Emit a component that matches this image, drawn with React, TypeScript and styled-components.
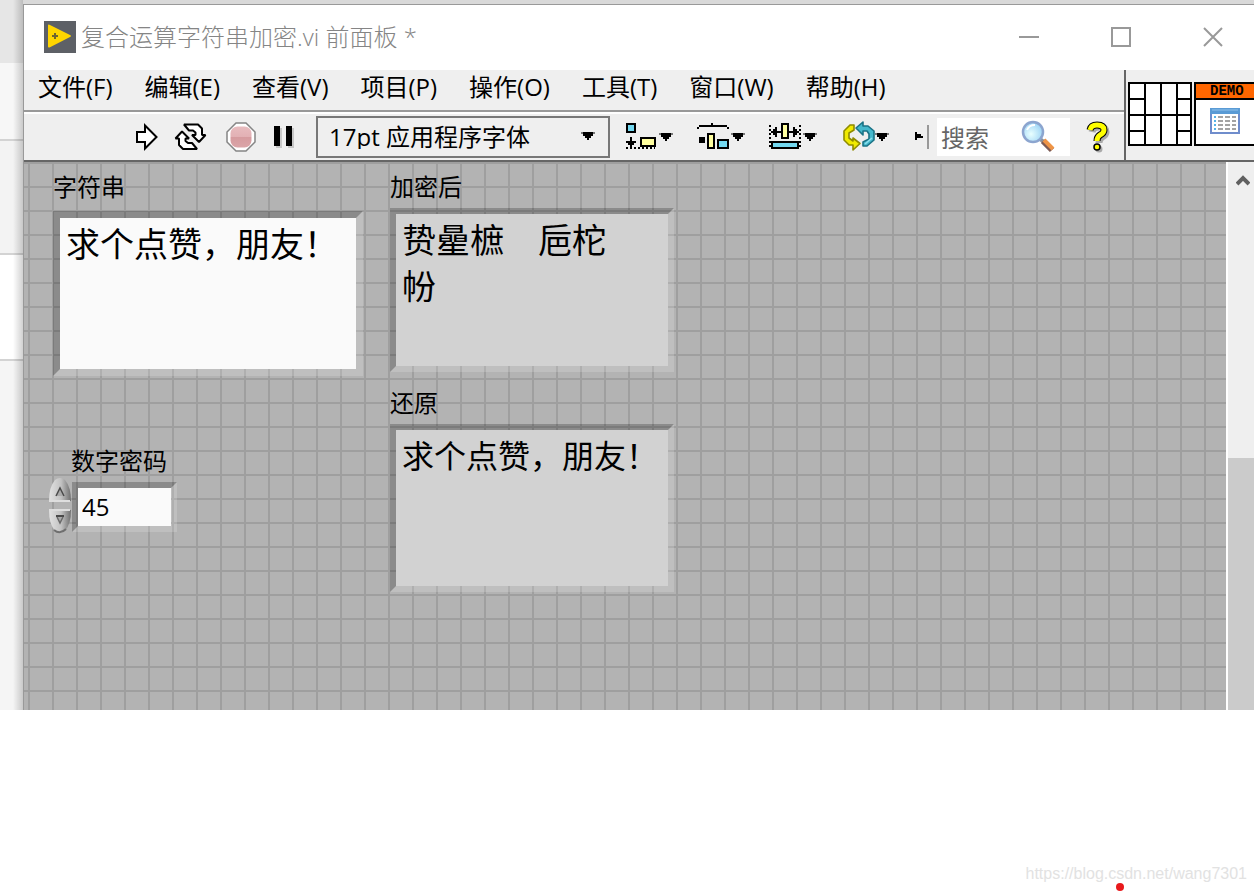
import React from "react";
import styled, { createGlobalStyle } from "styled-components";

const GlobalStyle = createGlobalStyle`
  *, *::before, *::after { box-sizing: border-box; }
  body { margin: 0; background: #ffffff; }
  button, input, select, textarea { font: inherit; color: inherit; border-radius: 0; }
  svg { display: block; flex: none; }
`;

const Page = styled.div`
  min-height: 100vh;
  display: flex;
  flex-direction: column;
  overflow-x: hidden;
  font-family: "Open Sans", "Noto Sans CJK SC", sans-serif;
  font-size: 24px;
  line-height: 24px;
  color: #000000;
`;

const Desktop = styled.main`
  display: flex;
  padding-top: 4px;
  background: #d9d9d9;
`;

const Backdrop = styled.div`
  width: 23px;
  flex: none;
  display: flex;
  flex-direction: column;
  margin-top: -4px;
  position: relative;
  &::after {
    content: "";
    position: absolute;
    inset: 0 0 0 auto;
    width: 10px;
    background: linear-gradient(to right, rgba(0, 0, 0, 0), rgba(0, 0, 0, 0.18));
  }
`;

const Strip = styled.div<{ $h?: number; $tone: string; $line?: boolean }>`
  ${(p) => (p.$h ? `height: ${p.$h}px;` : "flex: 1;")}
  background: ${(p) => p.$tone};
  border-bottom: ${(p) => (p.$line ? "2px solid #d3d3d3" : "none")};
`;

const Window = styled.section`
  flex: 1;
  min-width: 0;
  border-top: 1px solid #999999;
  border-left: 1px solid #999999;
  background: #efefef;
`;

const TitleBar = styled.header`
  height: 65px;
  display: flex;
  align-items: center;
  gap: 5px;
  padding: 0 31px 2px 20px;
  background: #ffffff;
`;

const Title = styled.h1`
  flex: 1;
  margin: 0;
  font-size: 24px;
  line-height: 32px;
  font-weight: 300;
  color: #858585;
  white-space: nowrap;
`;

const WindowButtons = styled.div`
  display: flex;
  gap: 72px;
`;

const PlainButton = styled.button`
  display: flex;
  align-items: center;
  flex: none;
  padding: 0;
  border: 0;
  background: none;
`;

const Chrome = styled.div`
  display: flex;
  border-bottom: 2px solid #666666;
`;

const Bars = styled.div`
  flex: 1;
  min-width: 0;
`;

const MenuBar = styled.nav`
  height: 42px;
  display: flex;
  align-items: center;
  gap: 32px;
  padding: 0 14px 6px;
  border-bottom: 2px solid #999999;
`;

const MenuItem = styled.button`
  padding: 0;
  border: 0;
  background: none;
  line-height: 32px;
  white-space: nowrap;
`;

const ToolBar = styled.div`
  height: 48px;
  display: flex;
  align-items: center;
  padding: 0 14px 0 112px;
  border-top: 2px solid #ffffff;
`;

const RunGroup = styled.div`
  display: flex;
  align-items: center;
  gap: 16px;
  margin-right: 22px;
`;

const FontPicker = styled.div`
  position: relative;
  flex: none;
  width: 294px;
  svg { position: absolute; right: 15px; top: 16px; pointer-events: none; }
`;

const FontSelect = styled.select`
  appearance: none;
  width: 100%;
  height: 42px;
  padding: 0 36px 0 11px;
  border: 2px solid #777777;
  background: #efefef;
`;

const LayoutGroup = styled.div`
  display: flex;
  gap: 22px;
  margin: 0 24px 0 15px;
`;

const ArrangeButton = styled(PlainButton)`
  width: 50px;
  height: 34px;
`;

const SearchBox = styled.div`
  display: flex;
  align-items: center;
  flex: none;
  width: 133px;
  height: 38px;
  margin: 0 auto 0 8px;
  padding: 0 15px 0 4px;
  background: #ffffff;
`;

const SearchInput = styled.input`
  flex: 1;
  min-width: 0;
  height: 36px;
  padding: 0;
  border: 0;
  background: none;
  &::placeholder { color: #666666; opacity: 1; }
`;

const IconPane = styled.div`
  display: flex;
  flex: none;
  gap: 2px;
  width: 130px;
  padding: 12px 0 0 2px;
  border-left: 2px solid #666666;
  overflow: hidden;
`;

const ViIcon = styled.div`
  flex: none;
  width: 64px;
  height: 64px;
  border: 2px solid #000000;
  background: #ffffff;
  svg { margin: 8px 0 0 14px; }
`;

const DemoTag = styled.div`
  height: 16px;
  border-bottom: 2px solid #000000;
  background: #ff6600;
  font: bold 14px/14px "Liberation Mono", monospace;
  padding-left: 14px;
`;

const Work = styled.div`
  display: flex;
`;

const Canvas = styled.div`
  flex: 1;
  min-width: 0;
  display: flex;
  gap: 27px;
  padding: 13px 29px 118px;
  background-color: #b3b3b3;
  background-image:
    linear-gradient(to right, #9f9f9f 2px, transparent 2px),
    linear-gradient(to bottom, #9f9f9f 2px, transparent 2px);
  background-size: 24px 24px;
  background-position: 4px 0;
`;

const Column = styled.div<{ $gap: number }>`
  display: flex;
  flex-direction: column;
  align-items: flex-start;
  gap: ${(p) => p.$gap}px;
`;

const Field = styled.div<{ $gap: number }>`
  display: flex;
  flex-direction: column;
  gap: ${(p) => p.$gap}px;
`;

const FieldLabel = styled.label`
  line-height: 24px;
`;

const StringBox = styled.textarea<{ $w: number; $h: number; $size: number; $edge: number; $indicator?: boolean }>`
  display: block;
  width: ${(p) => p.$w}px;
  height: ${(p) => p.$h}px;
  padding: 3px 6px;
  border: ${(p) => p.$edge}px solid;
  border-color: rgba(0, 0, 0, 0.22) rgba(255, 255, 255, 0.16) rgba(255, 255, 255, 0.16) rgba(0, 0, 0, 0.22);
  background: ${(p) => (p.$indicator ? "#d2d2d2" : "#fafafa")};
  background-clip: padding-box;
  font-size: ${(p) => p.$size}px;
  line-height: 46px;
  resize: none;
  outline: 0;
  overflow: hidden;
`;

const NumberRow = styled.div`
  display: flex;
  align-items: center;
  margin-left: -5px;
`;

const Spinner = styled.div`
  display: flex;
  flex-direction: column;
  gap: 2px;
  margin: -4px 0 -2px;
`;

const NumberInput = styled.input`
  width: 105px;
  height: 50px;
  padding: 0 4px 2px;
  border: 6px solid;
  border-color: rgba(0, 0, 0, 0.22) rgba(255, 255, 255, 0.16) rgba(255, 255, 255, 0.16) rgba(0, 0, 0, 0.22);
  background: #fafafa;
  background-clip: padding-box;
  outline: 0;
`;

const NumberField = styled(Field)`
  label { padding-left: 18px; }
`;

const ScrollBar = styled.div`
  width: 28px;
  flex: none;
  display: flex;
  flex-direction: column;
  justify-content: space-between;
  border-left: 2px solid #ffffff;
  background: #efefef;
`;

const ScrollArrow = styled(PlainButton)`
  height: 36px;
  justify-content: flex-end;
  padding-right: 4px;
`;

const ScrollThumb = styled.div`
  height: 46%;
  min-height: 24px;
  background: #cbcbcb;
`;

const Footer = styled.footer`
  position: relative;
  flex: 1;
  min-height: 100px;
  display: flex;
  justify-content: flex-end;
  align-items: flex-end;
  padding: 0 7px 8px 0;
`;

const Watermark = styled.a`
  font: 16px/20px "Liberation Sans", sans-serif;
  color: #e2e2e2;
  text-decoration: none;
`;

const RedDot = styled.span`
  position: absolute;
  right: 130px;
  bottom: 1px;
  width: 8px;
  height: 8px;
  border-radius: 50%;
  background: #e8191c;
`;

const Caret = () => (
  <svg width="14" height="8" viewBox="0 0 14 8" shapeRendering="crispEdges">
    <path d="M0 0H14V2H12V4H10V6H8V8H6V6H4V4H2V2H0Z" fill="#000" />
    <path d="M0 0H2V2H0ZM12 0H14V2H12Z" fill="#777" />
  </svg>
);

const AppLogo = () => (
  <svg width="32" height="32" viewBox="0 0 32 32">
    <rect width="32" height="32" fill="#5d6066" />
    <path d="M4 4.5Q4 3.2 5.5 3.8L26 14Q28 15 26 16L5.5 26.4Q4 27 4 25.5Z" fill="#ffd500" />
    <path d="M11 12V18M8 15H14" stroke="#6d6430" strokeWidth="2" />
  </svg>
);

const RunIcon = () => (
  <svg width="22" height="28" viewBox="0 0 22 28">
    <path d="M1 9H9V2.5L20.5 14L9 25.5V19H1Z" fill="#fff" stroke="#000" strokeWidth="2" />
  </svg>
);

const RunLoopIcon = () => (
  <svg width="36" height="28" viewBox="0 0 36 28">
    <g fill="#fff" stroke="#000" strokeWidth="2" strokeLinejoin="bevel">
      <path d="M10 1.5H24L28 5.5V12H31.5L25 19L18 12H21.5V9.5L19 7.5H15Z" />
      <path d="M23 26H9L5 22V15.5H1.5L8 8.5L15 15.5H11.5V18L14 20H18Z" />
    </g>
  </svg>
);

const AbortIcon = () => (
  <svg width="30" height="30" viewBox="0 0 30 30">
    <defs>
      <linearGradient id="stop" x1="0" y1="0" x2="0" y2="1">
        <stop offset="0" stopColor="#e8bcbf" />
        <stop offset=".5" stopColor="#e2b0b4" />
        <stop offset=".52" stopColor="#d69b9f" />
        <stop offset="1" stopColor="#dba5a8" />
      </linearGradient>
    </defs>
    <path d="M10 1H20L29 10V20L20 29H10L1 20V10Z" fill="#fff" stroke="#858585" strokeWidth="1.5" />
    <rect x="4.5" y="4.5" width="21" height="21" rx="7" fill="url(#stop)" />
  </svg>
);

const PauseIcon = () => (
  <svg width="22" height="22" viewBox="-2 0 22 22" shapeRendering="crispEdges">
    <path d="M2 2H8V22H2ZM14 2H20V22H14Z" fill="#c7c7c7" />
    <path d="M0 0H6V20H0ZM12 0H18V20H12Z" fill="#000" />
  </svg>
);

const AlignIcon = () => (
  <svg width="34" height="28" viewBox="0 0 34 28" shapeRendering="crispEdges">
    <rect x="2" y="1" width="8" height="8" fill="#73d8f0" stroke="#000" strokeWidth="2" />
    <path d="M5 14H7V18H11V20H9V22H7V24H5V22H3V20H1V18H5Z" />
    <rect x="16" y="15" width="14" height="8" fill="#ffffa0" stroke="#000" strokeWidth="2" />
    <path d="M1 25H30" stroke="#000" strokeWidth="2" strokeDasharray="2 2" />
  </svg>
);

const DistributeIcon = () => (
  <svg width="34" height="28" viewBox="0 0 34 28" shapeRendering="crispEdges">
    <path d="M0 4H2V2H14V0H16V2H30V4H32V6H30V4H2V6H0Z" />
    <path d="M2 14H8V20H2Z" />
    <rect x="11" y="11" width="6" height="14" fill="#ffffa0" stroke="#000" strokeWidth="2" />
    <rect x="21" y="17" width="10" height="8" fill="#73d8f0" stroke="#000" strokeWidth="2" />
  </svg>
);

const ResizeIcon = () => (
  <svg width="34" height="28" viewBox="0 0 34 28" shapeRendering="crispEdges">
    <path d="M1 2V26M31 2V26" stroke="#000" strokeWidth="2" strokeDasharray="2 2" />
    <path d="M2 8H4V6H6V4H8V8H12V10H8V14H6V12H4V10H2ZM30 8H28V6H26V4H24V8H20V10H24V14H26V12H28V10H30Z" />
    <rect x="13" y="1" width="6" height="14" fill="#ffffa0" stroke="#000" strokeWidth="2" />
    <rect x="3" y="19" width="26" height="6" fill="#73d8f0" stroke="#000" strokeWidth="2" />
  </svg>
);

const ReorderIcon = () => (
  <svg width="34" height="32" viewBox="0 0 34 32">
    <g strokeWidth="1.6" strokeLinejoin="round">
      <path d="M13 4H9L3 10V19L8 24H12V29L19 22.5L12 17V20L8 17V12L13 9Z" fill="#f0ea00" stroke="#8f8b00" />
      <path d="M22 25H26L33 19V10L27 5H22V1L15 7L22 14V10H26L28 13V18L22 21Z" fill="#45b8cc" stroke="#1b7386" />
      <path d="M24 23L31 17" fill="none" stroke="#8ce0ee" />
    </g>
  </svg>
);

const OverflowIcon = () => (
  <svg width="14" height="24" viewBox="0 0 14 24" shapeRendering="crispEdges">
    <path d="M0 7H2V9H6V11H8V13H6V13H2V15H0Z" />
    <path d="M12 0H14V24H12Z" fill="#999" />
  </svg>
);

const SearchIcon = () => (
  <svg width="34" height="34" viewBox="0 0 34 34">
    <defs>
      <radialGradient id="lens" cx=".4" cy=".6" r=".6">
        <stop offset="0" stopColor="#e9ffff" />
        <stop offset="1" stopColor="#9fd5f5" />
      </radialGradient>
    </defs>
    <path d="M19 19L23 22" stroke="#8d9199" strokeWidth="4" />
    <path d="M22 21L31 30" stroke="#7d5b55" strokeWidth="6" />
    <path d="M23 20L32 29" stroke="#ef9446" strokeWidth="4" />
    <circle cx="12" cy="12" r="10" fill="url(#lens)" stroke="#8ca5cf" strokeWidth="2.5" />
    <path d="M6 10Q8 5 14 5" fill="none" stroke="#fff" strokeWidth="2" />
  </svg>
);

const HelpIcon = () => {
  const hook = "M4 9Q5 4 11 4Q18 4 18 9Q18 12 14 14Q11 16 11 20";
  return (
    <svg width="24" height="32" viewBox="0 0 24 32">
      <g transform="translate(2 2)" fill="none" stroke="#aaa">
        <path d={hook} strokeWidth="7" />
        <circle cx="11" cy="26" r="2" strokeWidth="3" />
      </g>
      <path d={hook} fill="none" stroke="#000" strokeWidth="7" />
      <path d={hook} fill="none" stroke="#ffff00" strokeWidth="5" />
      <circle cx="11" cy="26" r="3" fill="#ffff00" stroke="#000" strokeWidth="1.5" />
    </svg>
  );
};

const ConnectorPane = () => (
  <svg width="64" height="64" viewBox="0 0 64 64" shapeRendering="crispEdges">
    <rect x="1" y="1" width="62" height="62" fill="#fff" stroke="#000" strokeWidth="2" />
    <path d="M17 0V64M33 0V64M49 0V64M0 33H64M0 17H17M0 49H17M49 17H64M49 49H64" stroke="#000" strokeWidth="2" />
  </svg>
);

const TableGlyph = () => (
  <svg width="30" height="26" viewBox="0 0 30 26">
    <rect x="1" y="1" width="28" height="24" fill="#fff" stroke="#6f8dcc" strokeWidth="2" />
    <path d="M0 0H30V6H0Z" fill="#5a9bd5" />
    <path d="M2 2H28" stroke="#8fc2ec" />
    <path d="M4 9H6M4 13H6M4 17H6M4 21H6" stroke="#55b4e8" strokeWidth="2" />
    <path d="M8 9H13M15 9H20M22 9H26M8 13H13M15 13H20M22 13H26M8 17H13M15 17H20M22 17H26M8 21H13M15 21H20M22 21H26" stroke="#a3a3a3" strokeWidth="2" />
  </svg>
);

const SpinIcon = ({ down }: { down?: boolean }) => (
  <svg width="24" height="27" viewBox="0 0 24 27">
    <defs>
      <linearGradient id={down ? "spin-down" : "spin-up"}>
        <stop offset="0" stopColor="#e2e2e2" />
        <stop offset=".55" stopColor="#c2c2c2" />
        <stop offset="1" stopColor="#6f6f6f" />
      </linearGradient>
    </defs>
    {down ? (
      <>
        <path d="M1 3H23Q23 17 17 24Q12 28 7 24Q1 17 1 3Z" fill="url(#spin-down)" />
        <path d="M6 23Q12 28 18 22" fill="none" stroke="#6f6f6f" strokeWidth="2" />
        <path d="M1 3H22" stroke="#dddddd" strokeWidth="2" />
        <path d="M8 9H16" stroke="#4a4a4a" strokeWidth="2" />
        <path d="M9 10L12 16L15 10" fill="#aaa" stroke="#6a6a6a" strokeWidth="1.5" />
      </>
    ) : (
      <>
        <path d="M1 23Q1 9 7 2Q12 -2 17 2Q23 9 23 23Z" fill="url(#spin-up)" />
        <path d="M1 23H22" stroke="#dedede" strokeWidth="2" />
        <path d="M8 18L12 10L16 18" fill="#aaa" stroke="#4a4a4a" strokeWidth="1.5" />
      </>
    )}
  </svg>
);

const menus = ["文件(F)", "编辑(E)", "查看(V)", "项目(P)", "操作(O)", "工具(T)", "窗口(W)", "帮助(H)"];

const arrangeTools = [
  { name: "对齐对象", Icon: AlignIcon },
  { name: "分布对象", Icon: DistributeIcon },
  { name: "调整对象大小", Icon: ResizeIcon },
  { name: "重新排序", Icon: ReorderIcon },
];

export default function App() {
  return (
    <Page>
      <GlobalStyle />
      <Desktop>
        <Backdrop>
          <Strip $h={63} $tone="#e6e6e6" />
          <Strip $h={78} $tone="#f7f7f7" $line />
          <Strip $h={114} $tone="#f3f3f3" $line />
          <Strip $h={106} $tone="#ffffff" $line />
          <Strip $tone="#f5f5f5" />
        </Backdrop>
        <Window>
          <TitleBar>
            <AppLogo />
            <Title>复合运算字符串加密.vi 前面板 *</Title>
            <WindowButtons>
              <PlainButton aria-label="最小化">
                <svg width="20" height="20"><path d="M0 10H20" stroke="#999" strokeWidth="2" /></svg>
              </PlainButton>
              <PlainButton aria-label="最大化">
                <svg width="20" height="20"><rect x="1" y="1" width="18" height="18" fill="none" stroke="#999" strokeWidth="2" /></svg>
              </PlainButton>
              <PlainButton aria-label="关闭">
                <svg width="20" height="20"><path d="M1 1L19 19M19 1L1 19" stroke="#999" strokeWidth="2" /></svg>
              </PlainButton>
            </WindowButtons>
          </TitleBar>
          <Chrome>
            <Bars>
              <MenuBar>
                {menus.map((m) => <MenuItem key={m}>{m}</MenuItem>)}
              </MenuBar>
              <ToolBar>
                <RunGroup>
                  <PlainButton aria-label="运行"><RunIcon /></PlainButton>
                  <PlainButton aria-label="连续运行"><RunLoopIcon /></PlainButton>
                  <PlainButton aria-label="中止执行"><AbortIcon /></PlainButton>
                  <PlainButton aria-label="暂停"><PauseIcon /></PlainButton>
                </RunGroup>
                <FontPicker>
                  <FontSelect aria-label="字体" defaultValue="app">
                    <option value="app">17pt 应用程序字体</option>
                  </FontSelect>
                  <Caret />
                </FontPicker>
                <LayoutGroup>
                  {arrangeTools.map(({ name, Icon }) => (
                    <ArrangeButton key={name} aria-label={name}><Icon /><Caret /></ArrangeButton>
                  ))}
                </LayoutGroup>
                <PlainButton aria-label="更多工具"><OverflowIcon /></PlainButton>
                <SearchBox>
                  <SearchInput type="text" aria-label="搜索" placeholder="搜索" />
                  <SearchIcon />
                </SearchBox>
                <PlainButton aria-label="即时帮助"><HelpIcon /></PlainButton>
              </ToolBar>
            </Bars>
            <IconPane>
              <ConnectorPane />
              <ViIcon>
                <DemoTag>DEMO</DemoTag>
                <TableGlyph />
              </ViIcon>
            </IconPane>
          </Chrome>
          <Work>
            <Canvas>
              <Column $gap={73}>
                <Field $gap={12}>
                  <FieldLabel htmlFor="source">字符串</FieldLabel>
                  <StringBox id="source" $w={310} $h={165} $size={34} $edge={7} spellCheck={false} defaultValue="求个点赞，朋友！" />
                </Field>
                <NumberField $gap={9}>
                  <FieldLabel htmlFor="key">数字密码</FieldLabel>
                  <NumberRow>
                    <Spinner>
                      <PlainButton aria-label="增加"><SpinIcon /></PlainButton>
                      <PlainButton aria-label="减少"><SpinIcon down /></PlainButton>
                    </Spinner>
                    <NumberInput id="key" type="text" inputMode="numeric" defaultValue="45" />
                  </NumberRow>
                </NumberField>
              </Column>
              <Column $gap={19}>
                <Field $gap={9}>
                  <FieldLabel htmlFor="encrypted">加密后</FieldLabel>
                  <StringBox id="encrypted" $w={284} $h={164} $size={34} $edge={6} $indicator readOnly spellCheck={false} value={"贽曐樜　巵柁\n帉"} />
                </Field>
                <Field $gap={9}>
                  <FieldLabel htmlFor="restored">还原</FieldLabel>
                  <StringBox id="restored" $w={284} $h={168} $size={32} $edge={6} $indicator readOnly spellCheck={false} value="求个点赞，朋友！" />
                </Field>
              </Column>
            </Canvas>
            <ScrollBar>
              <ScrollArrow aria-label="向上滚动">
                <svg width="14" height="12"><path d="M1 10L7 4L13 10" fill="none" stroke="#606060" strokeWidth="4" /></svg>
              </ScrollArrow>
              <ScrollThumb />
            </ScrollBar>
          </Work>
        </Window>
      </Desktop>
      <Footer>
        <Watermark href="https://blog.csdn.net/wang7301">https://blog.csdn.net/wang7301</Watermark>
        <RedDot />
      </Footer>
    </Page>
  );
}
